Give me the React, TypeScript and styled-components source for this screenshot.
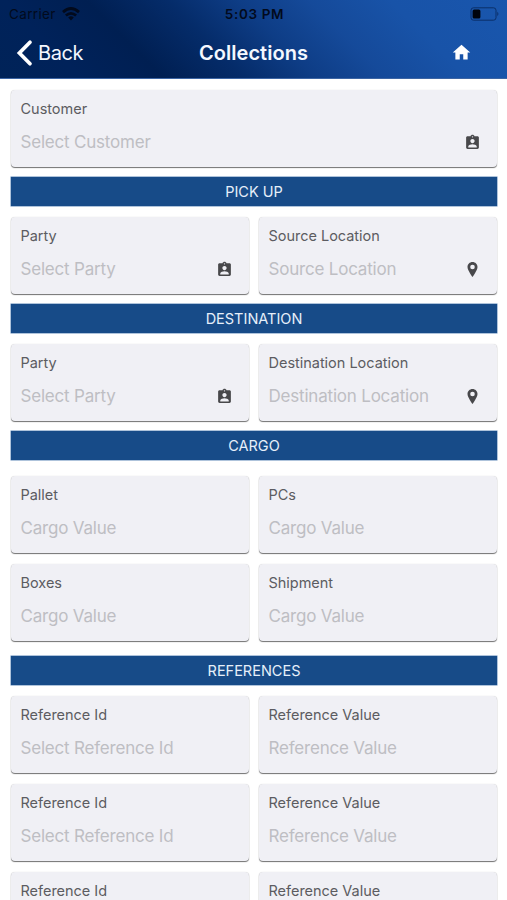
import React from "react";
import styled, { createGlobalStyle } from "styled-components";
import { MdAssignmentInd, MdHome } from "react-icons/md";

const GlobalStyle = createGlobalStyle`
  * { box-sizing: border-box; }
  body {
    margin: 0;
    background: #fff;
    font-family: Inter, "Liberation Sans", sans-serif;
  }
`;

const Screen = styled.div`
  width: 507px;
  height: 900px;
  overflow: hidden;
  background: #fff;
`;

const Header = styled.header`
  height: 79px;
  background: linear-gradient(
    45deg,
    #002358 0%,
    #00225a 14%,
    #001f52 28%,
    #052c6a 42%,
    #0e3d86 54%,
    #154a9a 66%,
    #1853a8 80%,
    #1956ad 100%
  );
  border-bottom: 1px solid #3c65a4;
`;

const StatusBar = styled.div`
  display: grid;
  grid-template-columns: 1fr auto 1fr;
  align-items: center;
  height: 27px;
  padding: 0 7px 0 9px;
  color: #020a1c;
  font-size: 13.5px;
`;

const Carrier = styled.div`
  display: flex;
  align-items: center;
  gap: 6px;
  letter-spacing: 0.35px;
`;

const Time = styled.div`
  font-weight: 600;
  letter-spacing: 0.65px;
`;

const BatterySlot = styled.div`
  display: flex;
  justify-content: flex-end;
`;

const NavBar = styled.nav`
  display: grid;
  grid-template-columns: 1fr auto 1fr;
  align-items: center;
  height: 51px;
  padding: 0 16px;
  color: #f4f8ff;
`;

const BackButton = styled.button`
  display: flex;
  align-items: center;
  gap: 5px;
  padding: 0;
  border: 0;
  background: none;
  color: inherit;
  font: 400 20px Inter, sans-serif;
  letter-spacing: -0.45px;
`;

const Title = styled.h1`
  margin: 0;
  font-size: 20px;
  font-weight: 600;
  letter-spacing: 0.05px;
`;

const HomeButton = styled.button`
  display: flex;
  justify-self: end;
  margin-right: 19px;
  padding: 0;
  border: 0;
  background: none;
  color: #fff;
`;

const Form = styled.main`
  display: flex;
  flex-direction: column;
  gap: 10px;
  padding: 11px 10px 0 11px;
`;

const Banner = styled.h2<{ $spaced?: boolean }>`
  display: flex;
  align-items: center;
  justify-content: center;
  flex: none;
  height: 29px;
  margin: ${(p) => (p.$spaced ? "5px" : "0")} 0 1px;
  background: #174b88;
  box-shadow: 0 0 0 0.5px #5f88b8;
  color: #e6effa;
  font-size: 14.5px;
  font-weight: 400;
`;

const Fields = styled.div<{ $columns: number; $spaced?: boolean }>`
  display: grid;
  grid-template-columns: repeat(${(p) => p.$columns}, 1fr);
  gap: 11px 10px;
  margin-top: ${(p) => (p.$spaced ? "5px" : "0")};
`;

const Card = styled.div`
  display: flex;
  flex-direction: column;
  height: 77px;
  padding: 9px 16px 0 9.5px;
  border-radius: 4px;
  background: #f0f0f5;
  box-shadow: 0 1px 1px rgba(0, 0, 0, 0.55), 0 0 1px rgba(0, 0, 0, 0.2);
`;

const Label = styled.label`
  height: 20px;
  line-height: 20px;
  color: #5c5c61;
  font-size: 14.5px;
  letter-spacing: -0.02px;
  white-space: nowrap;
`;

const ValueRow = styled.div`
  display: flex;
  align-items: center;
  justify-content: space-between;
  height: 24px;
  margin-top: 11px;
  color: #48484b;
`;

const Placeholder = styled.span`
  color: #bebec3;
  font-size: 17px;
  letter-spacing: -0.2px;
  white-space: nowrap;
`;

type Icon = "person" | "pin";
type FieldData = { label: string; hint: string; icon?: Icon };
type SectionData = { title?: string; fields: FieldData[]; spaced?: boolean; titleSpaced?: boolean };

const reference: FieldData[] = [
  { label: "Reference Id", hint: "Select Reference Id" },
  { label: "Reference Value", hint: "Reference Value" },
];

const sections: SectionData[] = [
  { fields: [{ label: "Customer", hint: "Select Customer", icon: "person" }] },
  {
    title: "PICK UP",
    fields: [
      { label: "Party", hint: "Select Party", icon: "person" },
      { label: "Source Location", hint: "Source Location", icon: "pin" },
    ],
  },
  {
    title: "DESTINATION",
    fields: [
      { label: "Party", hint: "Select Party", icon: "person" },
      { label: "Destination Location", hint: "Destination Location", icon: "pin" },
    ],
  },
  {
    title: "CARGO",
    spaced: true,
    fields: ["Pallet", "PCs", "Boxes", "Shipment"].map((label) => ({ label, hint: "Cargo Value" })),
  },
  {
    title: "REFERENCES",
    titleSpaced: true,
    fields: [...reference, ...reference, ...reference],
  },
];

const Pin = () => (
  <svg width="17" height="17" viewBox="0 0 17 17">
    <path
      fill="currentColor"
      fillRule="evenodd"
      d="M8.5 1C5.7 1 3.5 3.2 3.5 6C3.5 9.3 8.5 16 8.5 16S13.5 9.3 13.5 6C13.5 3.2 11.3 1 8.5 1ZM8.5 3.7A2.3 2.3 0 1 1 8.5 8.3A2.3 2.3 0 1 1 8.5 3.7Z"
    />
  </svg>
);

const Field = ({ label, hint, icon }: FieldData) => (
  <Card>
    <Label>{label}</Label>
    <ValueRow>
      <Placeholder>{hint}</Placeholder>
      {icon === "person" && <MdAssignmentInd size={17} />}
      {icon === "pin" && <Pin />}
    </ValueRow>
  </Card>
);

const Wifi = () => (
  <svg width="18" height="14" viewBox="0 0 18 14" fill="none" stroke="currentColor" strokeWidth="2.8">
    <path d="M1 5.1Q9-2 17 5.1M3.9 8.5Q9 4.2 14.1 8.5" />
    <path d="M6.2 10.5Q9 8.2 11.8 10.5L9 13.4Z" fill="currentColor" stroke="none" />
  </svg>
);

const Battery = () => (
  <svg width="30" height="14" viewBox="0 0 30 14">
    <rect x="1" y="0.8" width="25" height="12.4" rx="2.5" fill="none" stroke="#0b2f69" strokeWidth="1" />
    <rect x="2.6" y="2.4" width="7.8" height="9.2" rx="1.5" fill="#00040d" />
    <path d="M27.3 4.8Q29.5 7 27.3 9.2Z" fill="#0b2f69" />
  </svg>
);

const Chevron = () => (
  <svg width="17" height="28" viewBox="0 0 17 28" fill="none" stroke="#fff" strokeWidth="3.7" strokeLinecap="round" strokeLinejoin="miter">
    <path d="M14 3.2L3.4 14L14 24.8" />
  </svg>
);

export default function App() {
  return (
    <>
      <GlobalStyle />
      <Screen>
        <Header>
          <StatusBar>
            <Carrier>
              Carrier
              <Wifi />
            </Carrier>
            <Time>5:03 PM</Time>
            <BatterySlot>
              <Battery />
            </BatterySlot>
          </StatusBar>
          <NavBar>
            <BackButton>
              <Chevron />
              Back
            </BackButton>
            <Title>Collections</Title>
            <HomeButton aria-label="Home">
              <MdHome size={21} />
            </HomeButton>
          </NavBar>
        </Header>
        <Form>
          {sections.map((section, i) => (
            <React.Fragment key={i}>
              {section.title && <Banner $spaced={section.titleSpaced}>{section.title}</Banner>}
              <Fields $columns={section.fields.length > 1 ? 2 : 1} $spaced={section.spaced}>
                {section.fields.map((field, j) => (
                  <Field key={j} {...field} />
                ))}
              </Fields>
            </React.Fragment>
          ))}
        </Form>
      </Screen>
    </>
  );
}
